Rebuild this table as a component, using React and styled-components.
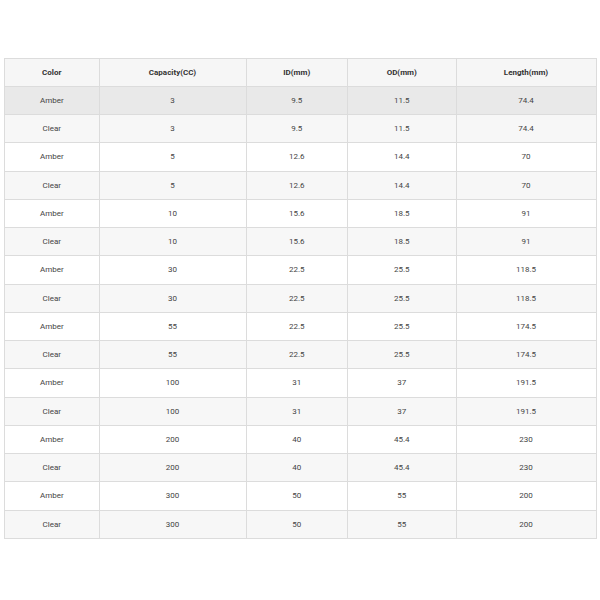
import React from "react";
import styled, { createGlobalStyle } from "styled-components";

const rows = [
    ["Amber", "3", "9.5", "11.5", "74.4"],
    ["Clear", "3", "9.5", "11.5", "74.4"],
    ["Amber", "5", "12.6", "14.4", "70"],
    ["Clear", "5", "12.6", "14.4", "70"],
    ["Amber", "10", "15.6", "18.5", "91"],
    ["Clear", "10", "15.6", "18.5", "91"],
    ["Amber", "30", "22.5", "25.5", "118.5"],
    ["Clear", "30", "22.5", "25.5", "118.5"],
    ["Amber", "55", "22.5", "25.5", "174.5"],
    ["Clear", "55", "22.5", "25.5", "174.5"],
    ["Amber", "100", "31", "37", "191.5"],
    ["Clear", "100", "31", "37", "191.5"],
    ["Amber", "200", "40", "45.4", "230"],
    ["Clear", "200", "40", "45.4", "230"],
    ["Amber", "300", "50", "55", "200"],
    ["Clear", "300", "50", "55", "200"],
];

const headers = ["Color", "Capacity(CC)", "ID(mm)", "OD(mm)", "Length(mm)"];
const widths = [94.5, 147, 101.5, 108.5, 140];

const App = () => {
    return (
        <Page>
            <GlobalStyle />
            <Table>
                <colgroup>
                    {widths.map((w, i) => (
                        <col key={i} style={{ width: `${w}px` }} />
                    ))}
                </colgroup>
                <thead>
                    <Row $bg="#f6f6f6">
                        {headers.map((h) => (
                            <Head key={h}>{h}</Head>
                        ))}
                    </Row>
                </thead>
                <tbody>
                    {rows.map((r, idx) => (
                        <Row
                            key={idx}
                            $bg={
                                idx === 0
                                    ? "#e9e9e9"
                                    : idx % 2 === 1
                                    ? "#f7f7f7"
                                    : "#ffffff"
                            }
                        >
                            {r.map((c, j) => (
                                <Cell key={j}>{c}</Cell>
                            ))}
                        </Row>
                    ))}
                </tbody>
            </Table>
        </Page>
    );
};

export default App;

const GlobalStyle = createGlobalStyle`
    body {
        margin: 0;
        background: #fff;
        font-family: Roboto, "Liberation Sans", sans-serif;
    }
`;

const Page = styled.div`
    padding: 57.5px 4px 0 4px;
`;

const Table = styled.table`
    width: 592px;
    table-layout: fixed;
    border-collapse: collapse;
    font-size: 8px;
    color: #444;
`;

const Row = styled.tr`
    height: 28.25px;
    background: ${(p) => p.$bg};
`;

const Head = styled.th`
    border: 1px solid #dcdcdc;
    font-weight: 700;
    color: #333;
    text-align: center;
    padding: 0;
`;

const Cell = styled.td`
    border: 1px solid #dcdcdc;
    text-align: center;
    padding: 0;
`;
